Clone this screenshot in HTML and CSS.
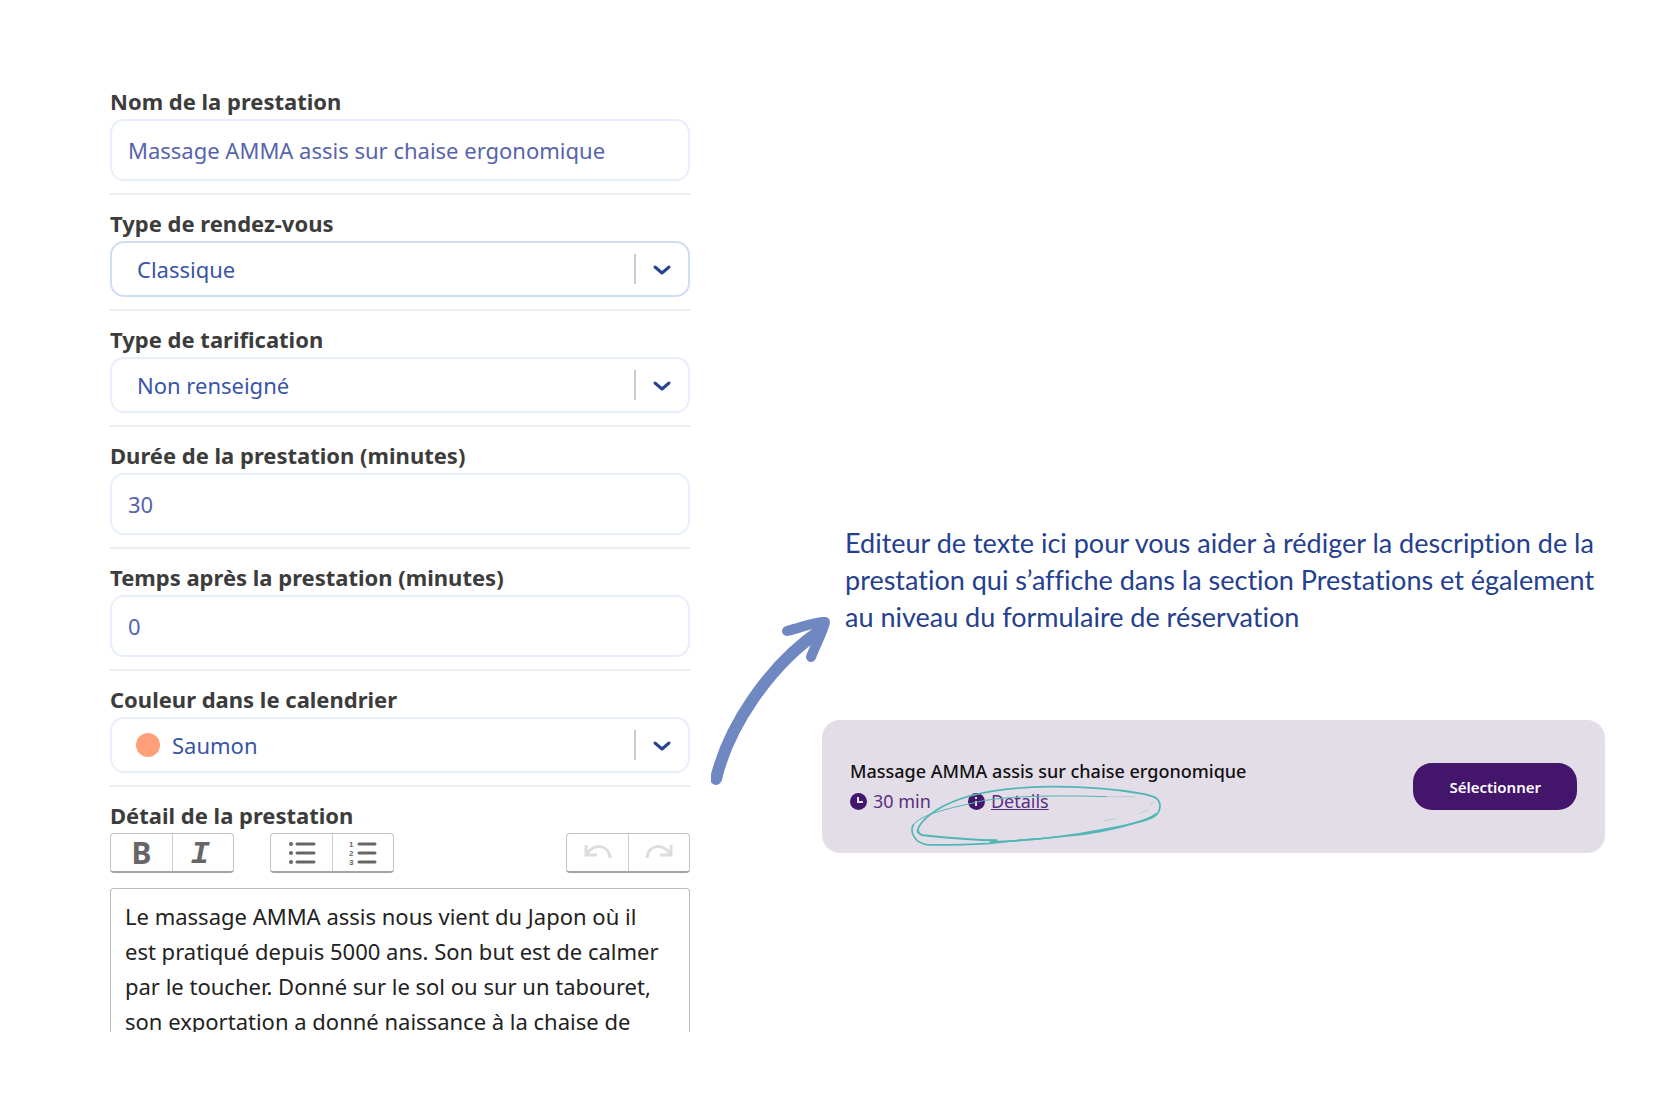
FILE: index.html
```html
<!DOCTYPE html>
<html lang="fr">
<head>
  <meta charset="UTF-8" />
  <meta name="viewport" content="width=device-width, initial-scale=1.0"/>
  <title>Prestation</title>
  <link rel="stylesheet" href="styles.css">
</head>
<body>

  <main class="page">

    <!-- Form -->
    <form class="service-form">
      <div class="field">
        <label for="name">Nom de la prestation</label>
        <input type="text" id="name" class="control" value="Massage AMMA assis sur chaise ergonomique">
      </div>

      <div class="field">
        <label for="type">Type de rendez-vous</label>
        <div class="select-box">
          <select id="type" class="control active">
            <option>Classique</option>
          </select>
          <svg class="arrow-down" viewBox="0 0 40 30"><path class="bar" d="M2 0V30"/><path class="chevron" d="M22 13l7 6 7-6"/></svg>
        </div>
      </div>

      <div class="field">
        <label for="pricing">Type de tarification</label>
        <div class="select-box">
          <select id="pricing" class="control">
            <option>Non renseigné</option>
          </select>
          <svg class="arrow-down" viewBox="0 0 40 30"><path class="bar" d="M2 0V30"/><path class="chevron" d="M22 13l7 6 7-6"/></svg>
        </div>
      </div>

      <div class="field">
        <label for="duration">Durée de la prestation (minutes)</label>
        <input type="text" id="duration" class="control" value="30">
      </div>

      <div class="field">
        <label for="after">Temps après la prestation (minutes)</label>
        <input type="text" id="after" class="control" value="0">
      </div>

      <div class="field">
        <label for="color">Couleur dans le calendrier</label>
        <div class="select-box">
          <span class="color-dot"></span>
          <select id="color" class="control with-dot">
            <option>Saumon</option>
          </select>
          <svg class="arrow-down" viewBox="0 0 40 30"><path class="bar" d="M2 0V30"/><path class="chevron" d="M22 13l7 6 7-6"/></svg>
        </div>
      </div>

      <!-- Text editor -->
      <div class="field editor">
        <label for="detail">Détail de la prestation</label>
        <div class="toolbar">
          <div class="tool-group">
            <button type="button" class="bold" aria-label="Gras">B</button>
            <button type="button" class="italic" aria-label="Italique">I</button>
          </div>
          <div class="tool-group">
            <button type="button" aria-label="Liste à puces">
              <svg width="28" height="26" viewBox="0 0 28 26">
                <g fill="#666"><circle cx="3" cy="4" r="2"/><circle cx="3" cy="13" r="2"/><circle cx="3" cy="22" r="2"/></g>
                <path d="M9 4h17M9 13h17M9 22h17" stroke="#666" stroke-width="3" stroke-linecap="round"/>
              </svg>
            </button>
            <button type="button" aria-label="Liste numérotée">
              <svg width="28" height="28" viewBox="0 0 28 28">
                <g class="numbers"><text x="0" y="8">1</text><text x="0" y="17">2</text><text x="0" y="26">3</text></g>
                <path d="M10 5h16M10 14h16M10 23h16" stroke="#666" stroke-width="3" stroke-linecap="round"/>
              </svg>
            </button>
          </div>
          <div class="tool-group history">
            <button type="button" aria-label="Annuler" disabled>
              <svg width="28" height="26" viewBox="0 0 28 26"><path d="M2 5v10h11M3 14C9 3 25 4 26 18" fill="none" stroke="#ddd" stroke-width="3"/></svg>
            </button>
            <button type="button" aria-label="Rétablir" disabled>
              <svg width="28" height="26" viewBox="0 0 28 26"><path d="M26 5v10H15M25 14C19 3 3 4 2 18" fill="none" stroke="#ddd" stroke-width="3"/></svg>
            </button>
          </div>
        </div>
        <textarea id="detail">Le massage AMMA assis nous vient du Japon où il est pratiqué depuis 5000 ans. Son but est de calmer par le toucher. Donné sur le sol ou sur un tabouret, son exportation a donné naissance à la chaise de</textarea>
      </div>
    </form>

    <!-- Note and preview -->
    <section class="preview">
      <div class="note">
        <p>Editeur de texte ici pour vous aider à rédiger la description de la prestation qui s’affiche dans la section Prestations et également au niveau du formulaire de réservation</p>
        <svg class="note-arrow" viewBox="0 0 120 170">
          <path class="shaft" d="M5 163C17 112 57 50 110 14" />
          <path d="M76 15C92 11 106 5 114 6C113 14 104 30 100 41" />
        </svg>
      </div>

      <div class="card">
        <div class="card-info">
          <h3>Massage AMMA assis sur chaise ergonomique</h3>
          <div class="card-meta">
            <span class="meta-item">
              <svg width="17" height="17" viewBox="0 0 17 17"><circle cx="8.5" cy="8.5" r="8.5" fill="#43156b"/><path d="M8 4v5h5" fill="none" stroke="#e3dde8" stroke-width="2"/></svg>
              30 min
            </span>
            <span class="meta-item">
              <svg width="17" height="17" viewBox="0 0 17 17"><circle cx="8.5" cy="8.5" r="8.5" fill="#43156b"/><path d="M8 4v2M8 8v5" fill="none" stroke="#e3dde8" stroke-width="2"/></svg>
              <a href="#">Details</a>
            </span>
          </div>
        </div>
        <button type="button" class="select-btn">Sélectionner</button>
        <svg class="scribble" viewBox="300 225 756 186">
          <path stroke-width="5" d="M323 367C322 345 350 320 380 300C450 255 570 232 720 230C830 229 920 238 990 250C1040 258 1050 268 1050 290C1048 318 1025 326 990 335C920 356 850 372 770 378C690 388 620 390 540 400C460 404 400 406 350 404C310 398 300 362 310 345"/>
          <path stroke-width="3" d="M310 345C330 312 430 292 520 272C620 256 760 256 890 260"/>
          <path stroke-width="6" d="M323 360C325 376 340 376 360 378C440 386 500 390 560 391"/>
          <path stroke-width="5" d="M540 396C650 392 770 380 870 360C950 346 1010 334 1038 312"/>
          <path stroke-width="1" d="M895 260h80M1030 275l-8 12M1015 300l-26 10M880 332l40-6"/>
        </svg>
      </div>
    </section>

  </main>

</body>
</html>
```

FILE: styles.css
```css
* {
  box-sizing: border-box;
}

body {
  font-family: "Noto Sans", sans-serif;
  margin: 0;
  background-color: #fff;
  color: #222;
}

.page {
  display: grid;
  grid-template-columns: 580fr 783fr;
  gap: 132px;
  align-items: start;
  padding: 73px 61px 40px 110px;
}

/* Form */
.service-form {
  min-width: 0;
}

.field {
  padding: 13px 0 12px;
  border-bottom: 2px solid #eee;
}

.field label {
  display: block;
  padding-bottom: 3px;
  font-size: 22px;
  line-height: 30px;
  font-weight: bold;
  color: #3c3c3c;
}

.control {
  display: block;
  width: 100%;
  height: 62px;
  padding: 0 16px;
  border: 2px solid #e9eefe;
  border-radius: 14px;
  background: #fff;
  font-family: inherit;
  font-size: 22px;
  color: #5664ad;
}

select.control {
  appearance: none;
  height: 56px;
  padding: 0 80px 0 25px;
  color: #3a55a4;
}

select.active {
  border-color: #d0dcf6;
}

select.with-dot {
  padding-left: 60px;
}

.select-box {
  position: relative;
}

.arrow-down {
  position: absolute;
  top: 13px;
  right: 17px;
  width: 40px;
  height: 30px;
  fill: none;
  pointer-events: none;
}

.bar {
  stroke: #ccc;
  stroke-width: 2;
}

.chevron {
  stroke: #27438f;
  stroke-width: 3;
  stroke-linecap: round;
  stroke-linejoin: round;
}

.color-dot {
  position: absolute;
  top: 16px;
  left: 26px;
  width: 24px;
  height: 24px;
  border-radius: 50%;
  background-color: #ffa07a;
}

/* Editor */
.editor {
  padding-bottom: 0;
  border-bottom: none;
}

.toolbar {
  display: flex;
  gap: 36px;
  margin-bottom: 15px;
}

.tool-group {
  display: flex;
  height: 40px;
  border: 1px solid #c4c4c4;
  border-bottom: 2px solid #a4a4a4;
  border-radius: 4px;
}

.tool-group button {
  display: flex;
  align-items: center;
  justify-content: center;
  width: 61px;
  padding: 0;
  border: none;
  background: none;
  color: #666;
}

.tool-group button + button {
  border-left: 1px solid #ccc;
}

.tool-group .bold {
  font: bold 30px/36px "Noto Sans", sans-serif;
}

.tool-group .italic {
  padding: 4px 6px 0 0;
  font: italic bold 32px/36px "Liberation Mono", monospace;
}

.numbers {
  font: bold 8px/8px "Liberation Sans", sans-serif;
  fill: #666;
}

.history {
  margin-left: auto;
}

textarea {
  display: block;
  width: 100%;
  height: 144px;
  padding: 10px 21px 0 14px;
  border: 1px solid #bbb;
  border-bottom: none;
  border-radius: 4px 4px 0 0;
  resize: none;
  overflow: hidden;
  font-family: inherit;
  font-size: 22px;
  line-height: 35px;
  color: #222;
}

/* Note */
.preview {
  padding-top: 451px;
}

.note {
  position: relative;
  padding-left: 23px;
  margin-bottom: 85px;
}

.note p {
  margin: 0;
  font-family: Lato, sans-serif;
  font-size: 27px;
  line-height: 37px;
  font-variant-ligatures: none;
  color: #24408e;
}

.note-arrow {
  position: absolute;
  top: 92px;
  left: -111px;
  width: 120px;
  height: 170px;
  fill: none;
  stroke: #7088c2;
  stroke-width: 10;
  stroke-linecap: round;
  stroke-linejoin: round;
}

.note-arrow .shaft {
  stroke-width: 12;
}

/* Booking card */
.card {
  position: relative;
  display: flex;
  justify-content: space-between;
  align-items: center;
  padding: 36px 28px;
  border-radius: 18px;
  background-color: #e3dde8;
}

.card h3 {
  margin: 0;
  font-size: 18px;
  line-height: 30px;
  font-weight: 500;
  color: #111;
}

.card-meta {
  display: flex;
  gap: 37px;
  font-size: 18px;
  line-height: 31px;
  color: #5a2d82;
}

.meta-item {
  display: flex;
  align-items: center;
  gap: 6px;
}

.card-meta a {
  color: inherit;
}

.select-btn {
  padding: 0 36px;
  height: 47px;
  border: none;
  border-radius: 19px;
  background-color: #43156b;
  color: #fff;
  font-family: inherit;
  font-size: 15px;
  font-weight: 600;
}

.scribble {
  position: absolute;
  top: 65px;
  left: 88px;
  width: 252px;
  height: 62px;
  fill: none;
  stroke: #50b5b5;
  stroke-linecap: round;
  pointer-events: none;
}
```
